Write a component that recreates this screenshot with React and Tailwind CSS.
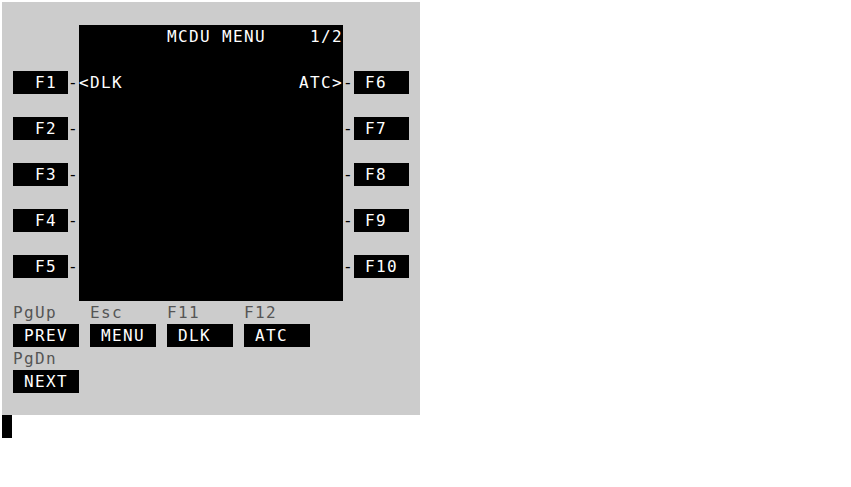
const font = { fontFamily: '"DejaVu Sans Mono", monospace' };

const leftKeys = ["F1", "F2", "F3", "F4", "F5"];
const rightKeys = ["F6", "F7", "F8", "F9", "F10"];

function Cells({ text, className = "" }) {
  // one terminal cell is 11px wide
  return (
    <span
      className={`inline-block whitespace-pre text-[16px] tracking-[1.37px] leading-[23px] ${className}`}
      style={{ width: text.length * 11 }}
    >
      {text}
    </span>
  );
}

function SideKeys({ keys, right }) {
  return (
    <div className="flex w-[77px] flex-col">
      {Array.from({ length: 12 }).map((_, i) => {
        const k = i % 2 === 0 && i >= 2 ? keys[(i - 2) / 2] : null;
        return (
          <div key={i} className="flex h-[23px]">
            {k &&
              (right ? (
                <>
                  <Cells text="-" className="text-black" />
                  <Cells text={(" " + k).padEnd(5, " ")} className="bg-black text-white" />
                </>
              ) : (
                <>
                  <Cells text=" " />
                  <Cells text={(" " + k).padStart(4, " ").padEnd(5, " ")} className="bg-black text-white" />
                  <Cells text="-" className="text-black" />
                </>
              ))}
          </div>
        );
      })}
    </div>
  );
}

const screenLines = [
  "        MCDU MENU    1/2",
  "",
  "<DLK                ATC>",
];

export default function App() {
  return (
    <div className="min-h-screen bg-white pl-[2px] pt-[2px]" style={font}>
      <div className="w-[418px] bg-[#cccccc]">
        <div className="h-[23px]" />
        <div className="flex">
          <SideKeys keys={leftKeys} />
          <div className="h-[276px] w-[264px] bg-black">
            {screenLines.map((l, i) => (
              <div key={i} className="h-[23px]">
                <Cells text={l} className="text-white" />
              </div>
            ))}
          </div>
          <SideKeys keys={rightKeys} right />
        </div>
        <div className="flex h-[23px] text-[#555555]">
          <Cells text=" PgUp   Esc    F11    F12" />
        </div>
        <div className="flex h-[23px]">
          <Cells text=" " />
          <Cells text=" PREV " className="bg-black text-white" />
          <Cells text=" " />
          <Cells text=" MENU " className="bg-black text-white" />
          <Cells text=" " />
          <Cells text=" DLK  " className="bg-black text-white" />
          <Cells text=" " />
          <Cells text=" ATC  " className="bg-black text-white" />
        </div>
        <div className="flex h-[23px] text-[#555555]">
          <Cells text=" PgDn" />
        </div>
        <div className="flex h-[23px]">
          <Cells text=" " />
          <Cells text=" NEXT " className="bg-black text-white" />
        </div>
        <div className="h-[22px]" />
      </div>
      <div className="h-[23px] w-[10px] bg-black" />
    </div>
  );
}
